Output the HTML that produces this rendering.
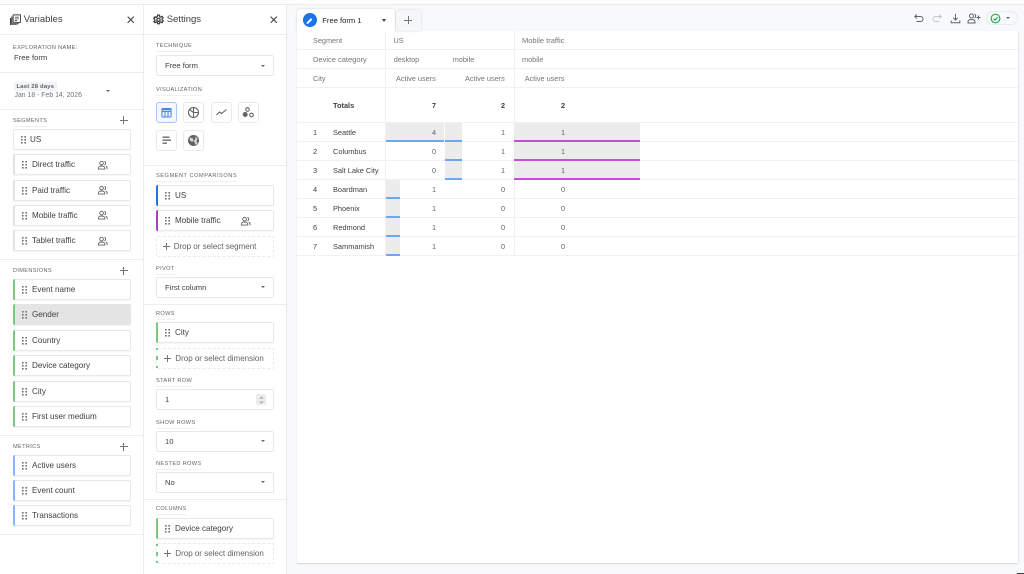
<!DOCTYPE html>
<html lang="en"><head><meta charset="utf-8"><title>Free form</title>
<style>
html,body{margin:0;padding:0;width:1024px;height:574px;overflow:hidden;background:#f8f9fa;font-family:"Liberation Sans",sans-serif;color:#5f6368}
div,span,svg{position:absolute;box-sizing:border-box}
#w{left:0;top:0;width:1024px;height:574px;overflow:hidden;background:#f8f9fa;filter:blur(.35px)}
.p{background:#fff}
.hl{position:absolute;height:1px;background:#eceded}
.vl{position:absolute;width:1px;background:#eceded}
.lb{font-size:5.6px;letter-spacing:.35px;color:#5f6368;line-height:8px;white-space:nowrap;margin-top:1px}
.ul{border-bottom:1px solid #eef0f1}
.ttl{font-size:9.5px;color:#3c4043;line-height:14px;white-space:nowrap}
.c{background:#fff;border:1px solid #e6e8ea;border-radius:2px;height:21px;width:118px;font-size:8.1px;line-height:19px;color:#3c4043;white-space:nowrap;box-shadow:0 1px 1px rgba(60,64,67,.05)}
.c b{position:absolute;left:-1px;top:-1px;bottom:-1px;width:2px;border-radius:2px 0 0 2px}
.c i{font-style:normal;position:absolute;left:18px;top:0}
.c svg.g{left:7px;top:6px;width:5px;height:8px}
.c svg.u{left:83px;top:4.500px;width:11px;height:10px}
.sel{background:#fff;border:1px solid #e6e8ea;border-radius:2px;height:21px;width:118px;left:156px;font-size:7.600px;line-height:19px;color:#3c4043;padding-left:8px}
.sel:after{content:"";position:absolute;right:8px;top:8.500px;border:2.400px solid transparent;border-top:2.800px solid #5f6368}
.d{border:1px dashed #e9ebed;border-radius:2px;height:21px;width:118px;left:156px;font-size:8px;line-height:19px;color:#5f6368;white-space:nowrap;background:#fff}
.pl{position:absolute;background:#70757a}
.ib{width:21px;height:21px;background:#fff;border:1px solid #e8eaed;border-radius:3px}
.ib svg{left:3px;top:3px;width:13px;height:13px}
.t{font-size:7.300px;line-height:10px;color:#70757a;white-space:nowrap}
.r{font-size:7.300px;line-height:10px;color:#5f6368;white-space:nowrap;text-align:right;width:30px}
.n{font-size:7.400px;line-height:10px;color:#3c4043;white-space:nowrap}
.bar{position:absolute;background:#ececec;border-bottom:2px solid #6ea6f5}
.bar.m{background:#ececec;border-bottom:2px solid #c54fdb}
</style></head><body>
<svg width="0" height="0" style="position:absolute"><defs>
<g id="grip" fill="#6b6f73"><rect x="0" y="0" width="1.600" height="1.600"/><rect x="3.400" y="0" width="1.600" height="1.600"/><rect x="0" y="3" width="1.600" height="1.600"/><rect x="3.400" y="3" width="1.600" height="1.600"/><rect x="0" y="6" width="1.600" height="1.600"/><rect x="3.400" y="6" width="1.600" height="1.600"/></g>
<g id="ppl" fill="none" stroke="#5f6368" stroke-width="1"><circle cx="4.500" cy="3.400" r="2"/><path d="M1 10V8.800C1 7.400 2.800 6.600 4.500 6.600S8 7.400 8 8.800V10z"/><path d="M7.600 1.500a2 2 0 0 1 0 3.800M9 6.800c1 .4 1.600 1 1.600 2V10"/></g>
</defs></svg>
<div id="w">
<div style="left:0;top:0;width:1024px;height:4px;background:#fdfdfd"></div>
<div class="hl" style="left:0;top:4px;width:1024px;background:#e8eaed"></div>

<!-- Panels -->
<div class="p" style="left:0;top:5px;width:143px;height:569px"></div>
<div class="vl" style="left:143px;top:5px;height:569px"></div>
<div class="p" style="left:144px;top:5px;width:142px;height:569px"></div>
<div class="vl" style="left:286px;top:5px;height:569px;background:#e6e8ea"></div>

<svg style="left:9.500px;top:13.500px" width="11.500" height="11.500" viewBox="0 0 13 13" fill="none" stroke="#3c4043" stroke-width="1.200"><rect x="3.500" y="1" width="8.500" height="8.500" rx=".6"/><path d="M2 3v8h8M.6 4.500v8h7"/><path d="M5.500 3.500h4.500M5.500 5.500h4.500M5.500 7.300h2.500" stroke-width=".9"/></svg>
<div class="ttl" style="left:23.700px;top:12.500px">Variables</div>
<svg style="left:127px;top:15.500px" width="7.500" height="7.500" viewBox="0 0 9 9" stroke="#3c4043" stroke-width="1.300"><path d="M.8.800l7.400 7.400M8.200.800L.8 8.200"/></svg>
<div class="hl" style="left:0;top:34px;width:286px"></div>

<div class="lb" style="left:13px;top:42.500px">EXPLORATION NAME:</div>
<div class="n" style="left:14px;top:52.500px;font-size:7.700px">Free form</div>
<div class="hl" style="left:0;top:72px;width:143px"></div>

<div style="left:14px;top:82px;width:43px;height:9px;background:#f1f3f4;border-radius:1px"></div>
<div class="lb" style="left:16.500px;top:81.500px;font-weight:700;letter-spacing:.2px;font-size:5.900px;color:#5f6368">Last 28 days</div>
<div class="n" style="left:14.500px;top:90.500px;color:#70757a;font-size:6.900px">Jan 18 - Feb 14, 2026</div>
<div style="left:105.500px;top:90px;border:2.200px solid transparent;border-top:2.800px solid #5f6368"></div>
<div class="hl" style="left:0;top:109px;width:143px"></div>

<div class="lb ul" style="left:13px;top:115.500px;height:10px">SEGMENTS</div>
<div class="pl" style="left:119.500px;top:119.500px;width:8px;height:1px"></div><div class="pl" style="left:123px;top:116px;width:1px;height:8px"></div>
<div class="c" style="left:13px;top:128.500px"><svg class="g" viewBox="0 0 5 8"><use href="#grip"/></svg><i style="left:16px">US</i></div>
<div class="c" style="left:13px;top:154px"><b style="background:#dfe1e5"></b><svg class="g" style="left:8px" viewBox="0 0 5 8"><use href="#grip"/></svg><i>Direct traffic</i><svg class="u" viewBox="0 0 11 11"><use href="#ppl"/></svg></div>
<div class="c" style="left:13px;top:179.500px"><b style="background:#dfe1e5"></b><svg class="g" style="left:8px" viewBox="0 0 5 8"><use href="#grip"/></svg><i>Paid traffic</i><svg class="u" viewBox="0 0 11 11"><use href="#ppl"/></svg></div>
<div class="c" style="left:13px;top:204.500px"><b style="background:#dfe1e5"></b><svg class="g" style="left:8px" viewBox="0 0 5 8"><use href="#grip"/></svg><i>Mobile traffic</i><svg class="u" viewBox="0 0 11 11"><use href="#ppl"/></svg></div>
<div class="c" style="left:13px;top:230px"><b style="background:#dfe1e5"></b><svg class="g" style="left:8px" viewBox="0 0 5 8"><use href="#grip"/></svg><i>Tablet traffic</i><svg class="u" viewBox="0 0 11 11"><use href="#ppl"/></svg></div>
<div class="hl" style="left:0;top:259px;width:143px"></div>

<div class="lb" style="left:13px;top:265.500px">DIMENSIONS</div>
<div class="pl" style="left:119.500px;top:270px;width:8px;height:1px"></div><div class="pl" style="left:123px;top:266.500px;width:1px;height:8px"></div>
<div class="c" style="left:13px;top:279px"><b style="background:#7cc67f"></b><svg class="g" style="left:8px" viewBox="0 0 5 8"><use href="#grip"/></svg><i>Event name</i></div>
<div class="c" style="left:13px;top:304px;background:#e4e4e4;border-color:#e4e4e4"><b style="background:#7cc67f"></b><svg class="g" style="left:8px" viewBox="0 0 5 8"><use href="#grip"/></svg><i>Gender</i></div>
<div class="c" style="left:13px;top:329.500px"><b style="background:#7cc67f"></b><svg class="g" style="left:8px" viewBox="0 0 5 8"><use href="#grip"/></svg><i>Country</i></div>
<div class="c" style="left:13px;top:355px"><b style="background:#7cc67f"></b><svg class="g" style="left:8px" viewBox="0 0 5 8"><use href="#grip"/></svg><i>Device category</i></div>
<div class="c" style="left:13px;top:380.500px"><b style="background:#7cc67f"></b><svg class="g" style="left:8px" viewBox="0 0 5 8"><use href="#grip"/></svg><i>City</i></div>
<div class="c" style="left:13px;top:405.500px"><b style="background:#7cc67f"></b><svg class="g" style="left:8px" viewBox="0 0 5 8"><use href="#grip"/></svg><i>First user medium</i></div>
<div class="hl" style="left:0;top:435px;width:143px"></div>

<div class="lb" style="left:13px;top:441.500px">METRICS</div>
<div class="pl" style="left:119.500px;top:446px;width:8px;height:1px"></div><div class="pl" style="left:123px;top:442.500px;width:1px;height:8px"></div>
<div class="c" style="left:13px;top:454.500px"><b style="background:#8ab4f8"></b><svg class="g" style="left:8px" viewBox="0 0 5 8"><use href="#grip"/></svg><i>Active users</i></div>
<div class="c" style="left:13px;top:480px"><b style="background:#8ab4f8"></b><svg class="g" style="left:8px" viewBox="0 0 5 8"><use href="#grip"/></svg><i>Event count</i></div>
<div class="c" style="left:13px;top:505px"><b style="background:#8ab4f8"></b><svg class="g" style="left:8px" viewBox="0 0 5 8"><use href="#grip"/></svg><i>Transactions</i></div>
<div class="hl" style="left:0;top:534px;width:143px"></div>

<!-- Settings panel -->
<svg style="left:153px;top:13.500px" width="11" height="11.500" viewBox="0 0 24 24" fill="none" stroke="#3c4043" stroke-width="2.800"><circle cx="12" cy="12" r="3.500"/><path d="M10 2h4l.6 3 2.500 1.100 2.600-1.600 2.500 3.500-2.200 2 .1 2.800 2.200 2-2.500 3.500-2.600-1.600-2.500 1.100-.6 3h-4l-.6-3-2.500-1.100-2.600 1.600L1.900 15.800l2.200-2L4 11 1.800 9l2.500-3.500 2.600 1.600L9.400 5z"/></svg>
<div class="ttl" style="left:166.700px;top:12.500px">Settings</div>
<svg style="left:270px;top:15.500px" width="7.500" height="7.500" viewBox="0 0 9 9" stroke="#3c4043" stroke-width="1.300"><path d="M.8.800l7.400 7.400M8.200.800L.8 8.200"/></svg>

<div class="lb ul" style="left:156px;top:41px;height:10px">TECHNIQUE</div>
<div class="sel" style="top:55px">Free form</div>
<div class="lb ul" style="left:156px;top:85px;height:10px">VISUALIZATION</div>

<div class="ib" style="left:156px;top:102px;border-color:#a8c7fa;background:#f3f7fe"><svg viewBox="0 0 13 13" fill="none" stroke="#4a86e8" stroke-width="1.100"><rect x="2" y="2.500" width="9" height="8.500" rx=".5"/><path d="M2 5.500h9M5 5.500V11M8 5.500V11"/><path d="M2 3.500h9" stroke-width="1.600"/></svg></div>
<div class="ib" style="left:183px;top:102px"><svg viewBox="0 0 13 13" fill="none" stroke="#5f6368" stroke-width="1.100"><circle cx="6.500" cy="6.500" r="5"/><path d="M6.500 1.500v10M6.500 6.500h5M2.500 3.500l4 3"/></svg></div>
<div class="ib" style="left:211px;top:102px"><svg viewBox="0 0 13 13" fill="none" stroke="#5f6368" stroke-width="1.100"><path d="M1.500 9l3-3 2 1.500 5-4"/></svg></div>
<div class="ib" style="left:238px;top:102px"><svg viewBox="0 0 13 13" fill="none" stroke="#5f6368" stroke-width="1.100"><circle cx="5.500" cy="3.500" r="1.800"/><circle cx="3.200" cy="8.500" r="1.900" fill="#5f6368"/><circle cx="9.500" cy="9" r="1.800"/></svg></div>
<div class="ib" style="left:156px;top:129.500px"><svg viewBox="0 0 13 13" fill="#5f6368"><rect x="2.500" y="2.500" width="7" height="1.300"/><rect x="2.500" y="5.500" width="8.500" height="1.300"/><rect x="2.500" y="8.500" width="4.500" height="1.300"/></svg></div>
<div class="ib" style="left:183px;top:129.500px"><svg viewBox="0 0 13 13" fill="#5f6368"><circle cx="6.500" cy="6.500" r="5.500"/><path d="M3 3.500l3 1 .5 2.500-1.500 1-2.500-2zM8 2.500l2.500 2-1 3 1.200 1.500-2.200 2-.8-2.500-1-1.500 1.800-2z" fill="#fff" opacity=".75"/></svg></div>
<div class="hl" style="left:144px;top:165px;width:142px"></div>

<div class="lb ul" style="left:156px;top:171px;height:10px;letter-spacing:.55px">SEGMENT COMPARISONS</div>
<div class="c" style="left:156px;top:184.500px"><b style="background:#1a73e8"></b><svg class="g" style="left:8px" viewBox="0 0 5 8"><use href="#grip"/></svg><i>US</i></div>
<div class="c" style="left:156px;top:210px"><b style="background:#a142c4"></b><svg class="g" style="left:8px" viewBox="0 0 5 8"><use href="#grip"/></svg><i>Mobile traffic</i><svg class="u" viewBox="0 0 11 11"><use href="#ppl"/></svg></div>
<div class="d" style="top:235.500px"><span class="pl" style="left:6px;top:9px;width:7px;height:1px"></span><span class="pl" style="left:9px;top:6px;width:1px;height:7px"></span><span style="left:16.700px;top:0">Drop or select segment</span></div>
<div class="lb ul" style="left:156px;top:264px;height:10px">PIVOT</div>
<div class="sel" style="top:276.500px">First column</div>
<div class="hl" style="left:144px;top:304px;width:142px"></div>

<div class="lb ul" style="left:156px;top:309px;height:10px">ROWS</div>
<div class="c" style="left:156px;top:322px"><b style="background:#7cc67f"></b><svg class="g" style="left:8px" viewBox="0 0 5 8"><use href="#grip"/></svg><i>City</i></div>
<div class="d" style="top:347.500px"><span class="pl" style="left:7px;top:9px;width:7px;height:1px"></span><span class="pl" style="left:10px;top:6px;width:1px;height:7px"></span><span style="left:18.300px;top:0">Drop or select dimension</span></div>
<div style="left:156px;top:348px;width:2px;height:2px;background:#7cc67f"></div><div style="left:156px;top:356px;width:2px;height:4px;background:#7cc67f"></div><div style="left:156px;top:366px;width:2px;height:2px;background:#7cc67f"></div>
<div class="lb ul" style="left:156px;top:376px;height:10px">START ROW</div>
<div class="sel" style="top:389px">1</div>
<div style="left:256px;top:394px;width:10px;height:11px;background:#ececed;border-radius:1px"></div>
<svg style="left:258.500px;top:395.500px" width="5" height="8" viewBox="0 0 5 8" fill="none" stroke="#80868b" stroke-width=".7"><path d="M.8 2.800L2.500 1l1.700 1.800M.8 5.200L2.500 7l1.700-1.800"/></svg>
<div class="lb ul" style="left:156px;top:418px;height:10px">SHOW ROWS</div>
<div class="sel" style="top:430.500px">10</div>
<div class="lb ul" style="left:156px;top:459px;height:10px">NESTED ROWS</div>
<div class="sel" style="top:471.500px">No</div>
<div class="hl" style="left:144px;top:499px;width:142px"></div>

<div class="lb ul" style="left:156px;top:504px;height:10px">COLUMNS</div>
<div class="c" style="left:156px;top:517.500px"><b style="background:#7cc67f"></b><svg class="g" style="left:8px" viewBox="0 0 5 8"><use href="#grip"/></svg><i>Device category</i></div>
<div class="d" style="top:543px"><span class="pl" style="left:7px;top:9px;width:7px;height:1px"></span><span class="pl" style="left:10px;top:6px;width:1px;height:7px"></span><span style="left:18.300px;top:0">Drop or select dimension</span></div>
<div style="left:156px;top:544px;width:2px;height:2px;background:#7cc67f"></div><div style="left:156px;top:551.500px;width:2px;height:4px;background:#7cc67f"></div><div style="left:156px;top:561px;width:2px;height:2px;background:#7cc67f"></div>

<!-- Canvas -->
<div class="p" style="left:297px;top:31px;width:721px;height:532px;box-shadow:0 1px 1px rgba(60,64,67,.18),1px 0 1px rgba(60,64,67,.06)"></div>

<!-- Tabs -->
<div class="p" style="left:297px;top:9px;width:98px;height:23px;border-radius:3px 3px 0 0;box-shadow:0 0 2px rgba(60,64,67,.2)"></div>
<div style="left:396px;top:10px;width:25px;height:21px;background:#f6f7f8;border-radius:3px 3px 0 0;box-shadow:0 0 2px rgba(60,64,67,.2)"></div>
<div class="p" style="left:297px;top:31px;width:98px;height:3px"></div>
<div style="left:302.700px;top:13.300px;width:14px;height:14px;border-radius:50%;background:#1a73e8"></div>
<svg style="left:306px;top:16.500px" width="7.500" height="7.500" viewBox="0 0 7 7" fill="#fff"><path d="M.6 6.400V5.100L4.600 1.100l1.300 1.300-4 4z"/></svg>
<div class="n" style="left:322.300px;top:16px;color:#202124;font-size:7.600px">Free form 1</div>
<div style="left:382.300px;top:18.500px;border:2.400px solid transparent;border-top:3px solid #3c4043"></div>
<div class="pl" style="left:404px;top:20px;width:8px;height:1px"></div><div class="pl" style="left:407.500px;top:16px;width:1px;height:8px"></div>

<!-- Toolbar -->
<svg style="left:913px;top:13px" width="11" height="11" viewBox="0 0 11 11" fill="none" stroke="#5f6368" stroke-width="1"><path d="M2 3.500h5.500a2.500 2.500 0 0 1 0 5H3.500"/><path d="M3.800 1.500L1.800 3.500l2 2"/></svg>
<svg style="left:932px;top:13px" width="11" height="11" viewBox="0 0 11 11" fill="none" stroke="#c4c7ca" stroke-width="1"><path d="M9 3.500H3.500a2.500 2.500 0 0 0 0 5H7.500"/><path d="M7.200 1.500l2 2-2 2"/></svg>
<svg style="left:950px;top:12.500px" width="11" height="11" viewBox="0 0 11 11" fill="none" stroke="#5f6368" stroke-width="1"><path d="M5.500 1v6M3.200 4.800l2.300 2.300 2.300-2.300M1.200 7.500v2.300h8.600V7.500"/></svg>
<svg style="left:967px;top:13px" width="14" height="11" viewBox="0 0 14 11" fill="none" stroke="#5f6368" stroke-width="1"><circle cx="4.500" cy="3" r="2"/><path d="M1 10V8.500c0-1.300 1.800-2.100 3.500-2.100S8 7.200 8 8.500V10z"/><path d="M7.500 1.200a2 2 0 0 1 0 3.700"/><path d="M11.500 2.500v4M9.500 4.500h4"/></svg>
<div style="left:986px;top:10.500px;width:31.500px;height:14.500px;border:1px solid #e8eaed;border-radius:8px;background:#f8f9fa"></div>
<svg style="left:989.500px;top:12.500px" width="11" height="11" viewBox="0 0 11 11" fill="none" stroke="#34a853" stroke-width="1.200"><circle cx="5.500" cy="5.500" r="4.300"/><path d="M3.500 5.600l1.500 1.500 2.700-2.800"/></svg>
<div style="left:1006px;top:17px;border:2.200px solid transparent;border-top:2.800px solid #5f6368"></div>

<!-- Table lines -->
<div class="hl" style="left:297px;top:49px;width:721px;background:#f0f1f2"></div>
<div class="hl" style="left:297px;top:68px;width:721px;background:#f0f1f2"></div>
<div class="hl" style="left:297px;top:87px;width:721px;background:#f0f1f2"></div>
<div class="hl" style="left:297px;top:122px;width:721px;background:#f0f1f2"></div>
<div class="hl" style="left:297px;top:141px;width:721px;background:#f0f1f2"></div>
<div class="hl" style="left:297px;top:160px;width:721px;background:#f0f1f2"></div>
<div class="hl" style="left:297px;top:179px;width:721px;background:#f0f1f2"></div>
<div class="hl" style="left:297px;top:198px;width:721px;background:#f0f1f2"></div>
<div class="hl" style="left:297px;top:217px;width:721px;background:#f0f1f2"></div>
<div class="hl" style="left:297px;top:236px;width:721px;background:#f0f1f2"></div>
<div class="hl" style="left:297px;top:255px;width:721px;background:#f0f1f2"></div>
<div class="vl" style="left:385px;top:31px;height:224px;background:#eef0f1"></div>
<div class="vl" style="left:514px;top:31px;height:224px;background:#eef0f1"></div>

<!-- Bars -->
<div class="bar" style="left:386px;top:123px;width:58px;height:19px"></div>
<div class="bar" style="left:445px;top:123px;width:17px;height:19px"></div>
<div class="bar" style="left:445px;top:142px;width:17px;height:19px"></div>
<div class="bar" style="left:445px;top:161px;width:17px;height:19px"></div>
<div class="bar" style="left:386px;top:180px;width:14px;height:19px"></div>
<div class="bar" style="left:386px;top:199px;width:14px;height:19px"></div>
<div class="bar" style="left:386px;top:218px;width:14px;height:19px"></div>
<div class="bar" style="left:386px;top:237px;width:14px;height:19px"></div>
<div class="bar m" style="left:514px;top:123px;width:126px;height:19px"></div>
<div class="bar m" style="left:514px;top:142px;width:126px;height:19px"></div>
<div class="bar m" style="left:514px;top:161px;width:126px;height:19px"></div>

<!-- Table headers -->
<div class="t" style="left:313px;top:36px">Segment</div>
<div class="t" style="left:393.500px;top:36px">US</div>
<div class="t" style="left:522px;top:36px;font-size:7.500px">Mobile traffic</div>
<div class="t" style="left:313px;top:55px;font-size:7.500px">Device category</div>
<div class="t" style="left:393.700px;top:55px">desktop</div>
<div class="t" style="left:452.700px;top:55px">mobile</div>
<div class="t" style="left:522px;top:55px">mobile</div>
<div class="t" style="left:313px;top:74px">City</div>
<div class="t" style="left:396px;top:74px">Active users</div>
<div class="t" style="left:465px;top:74px">Active users</div>
<div class="t" style="left:524.700px;top:74px">Active users</div>

<div class="n" style="left:333px;top:101px;font-weight:700">Totals</div>
<div class="r" style="left:406px;top:101px;font-weight:700;color:#3c4043">7</div>
<div class="r" style="left:475px;top:101px;font-weight:700;color:#3c4043">2</div>
<div class="r" style="left:535px;top:101px;font-weight:700;color:#3c4043">2</div>

<!-- Rows -->
<div class="n" style="left:313px;top:128px">1</div><div class="n" style="left:333px;top:128px">Seattle</div><div class="r" style="left:406px;top:128px">4</div><div class="r" style="left:475px;top:128px">1</div><div class="r" style="left:535px;top:128px">1</div>
<div class="n" style="left:313px;top:147px">2</div><div class="n" style="left:333px;top:147px">Columbus</div><div class="r" style="left:406px;top:147px">0</div><div class="r" style="left:475px;top:147px">1</div><div class="r" style="left:535px;top:147px">1</div>
<div class="n" style="left:313px;top:166px">3</div><div class="n" style="left:333px;top:166px">Salt Lake City</div><div class="r" style="left:406px;top:166px">0</div><div class="r" style="left:475px;top:166px">1</div><div class="r" style="left:535px;top:166px">1</div>
<div class="n" style="left:313px;top:185px">4</div><div class="n" style="left:333px;top:185px">Boardman</div><div class="r" style="left:406px;top:185px">1</div><div class="r" style="left:475px;top:185px">0</div><div class="r" style="left:535px;top:185px">0</div>
<div class="n" style="left:313px;top:204px">5</div><div class="n" style="left:333px;top:204px">Phoenix</div><div class="r" style="left:406px;top:204px">1</div><div class="r" style="left:475px;top:204px">0</div><div class="r" style="left:535px;top:204px">0</div>
<div class="n" style="left:313px;top:223px">6</div><div class="n" style="left:333px;top:223px">Redmond</div><div class="r" style="left:406px;top:223px">1</div><div class="r" style="left:475px;top:223px">0</div><div class="r" style="left:535px;top:223px">0</div>
<div class="n" style="left:313px;top:242px">7</div><div class="n" style="left:333px;top:242px">Sammamish</div><div class="r" style="left:406px;top:242px">1</div><div class="r" style="left:475px;top:242px">0</div><div class="r" style="left:535px;top:242px">0</div>

<div style="left:1017px;top:573px;width:7px;height:1px;background:#3c4043"></div>
</div>
</body></html>
